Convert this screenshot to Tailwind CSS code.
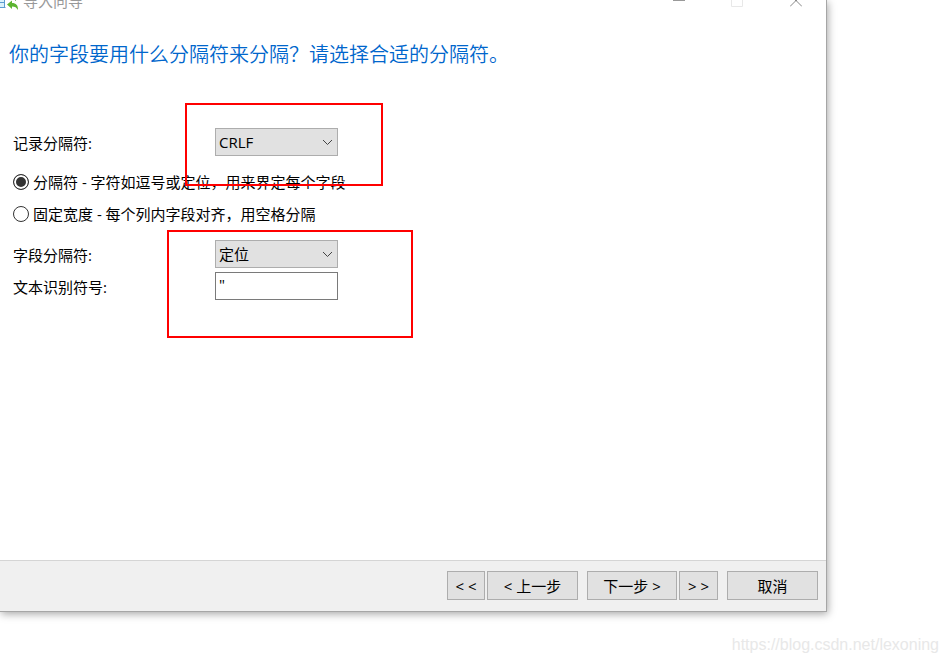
<!DOCTYPE html>
<html lang="zh-CN">
<head>
<meta charset="utf-8">
<title>导入向导</title>
<script src="https://cdn.jsdelivr.net/npm/@tailwindcss/browser@4"></script>
</head>
<body class="relative flex h-screen flex-col overflow-hidden bg-white pr-[120px] pb-[51px] font-['Open_Sans','Noto_Sans_CJK_SC',sans-serif] text-[15px] leading-5 font-[380] text-black">
<div class="flex flex-1 flex-col border-r border-b border-[#a6a6a6] bg-white shadow-[1px_2px_8px_rgba(0,0,0,0.35)]">
  <header class="flex h-[11px] items-end text-[#999999]">
    <svg class="mr-1 h-[11px] w-[19px] shrink-0" viewBox="0 0 19 11" aria-hidden="true">
      <path d="M0 0H5V7H0z" fill="#d9f1fb"/>
      <path d="M0 2.500H5M0 7.500H5.500M4.500 0V8" fill="none" stroke="#5b9bd0"/>
      <path d="M7 4.500L12 .5V3C16 3 18 5 18 10C16.500 7.500 15 6.500 12 6.500V9z" fill="#5cb531"/>
      <path d="M15.500 0V1" stroke="#87b87a"/>
    </svg>
    <h1 class="flex-1">导入向导</h1>
    <div class="flex self-start pr-6">
      <button aria-label="最小化" class="mr-[46px] block"><svg class="h-3 w-3" viewBox="0 0 12 12"><path d="M0 .5H12" stroke="#999999"/></svg></button>
      <button aria-label="最大化" disabled class="mr-[47px] block"><svg class="h-3 w-3" viewBox="0 0 12 12"><path d="M.5 0V6.500H11.500V0" fill="none" stroke="#e8e8e8"/></svg></button>
      <button aria-label="关闭" class="block"><svg class="h-3 w-3" viewBox="0 0 12 12"><path d="M0 6.500L6 .5L12 6.500M5 0L6 1L7 0" fill="none" stroke="#888888"/></svg></button>
    </div>
  </header>
  <main class="flex-1">
    <h2 class="px-[9px] pt-[30px] text-xl leading-7 font-[350] text-[#0066cc]">你的字段要用什么分隔符来分隔？请选择合适的分隔符。</h2>
    <form id="wizard" class="pt-[59px] pl-[13px]">
      <div class="flex h-7 items-center">
        <label for="record" class="w-[202px] pt-[2px]">记录分隔符:</label>
        <div class="relative w-[123px]">
          <select id="record" class="block h-7 w-full appearance-none rounded-none border border-[#adadad] bg-[#e1e1e1] px-[3px]"><option>CRLF</option></select>
          <svg class="pointer-events-none absolute top-[11px] right-[5px] h-[7px] w-[11px]" viewBox="0 0 11 7"><path d="M1 1L5.500 5.500L10 1" fill="none" stroke="#444444"/></svg>
          <div class="pointer-events-none absolute -top-[25px] -left-[30px] z-10 h-[83px] w-[198px] border-2 border-[#ff0000]"></div>
        </div>
      </div>
      <div class="flex flex-col pt-[10px]">
        <label class="flex h-8 items-center gap-1"><input type="radio" name="mode" checked class="h-4 w-4 appearance-none rounded-full border border-[#333333] bg-white checked:bg-[#333333] checked:shadow-[inset_0_0_0_2px_white]">分隔符 - 字符如逗号或定位，用来界定每个字段</label>
        <label class="flex h-8 items-center gap-1"><input type="radio" name="mode" class="h-4 w-4 appearance-none rounded-full border border-[#333333] bg-white checked:bg-[#333333] checked:shadow-[inset_0_0_0_2px_white]">固定宽度 - 每个列内字段对齐，用空格分隔</label>
      </div>
      <div class="flex flex-col gap-1 pt-[10px]">
        <div class="flex h-7 items-center">
          <label for="field" class="w-[202px] pt-[2px]">字段分隔符:</label>
          <div class="relative w-[123px]">
            <select id="field" class="block h-7 w-full appearance-none rounded-none border border-[#adadad] bg-[#e1e1e1] px-[3px]"><option>定位</option></select>
            <svg class="pointer-events-none absolute top-[11px] right-[5px] h-[7px] w-[11px]" viewBox="0 0 11 7"><path d="M1 1L5.500 5.500L10 1" fill="none" stroke="#444444"/></svg>
            <div class="pointer-events-none absolute -top-[10px] -left-12 z-10 h-[108px] w-[246px] border-2 border-[#ff0000]"></div>
          </div>
        </div>
        <div class="flex h-7 items-center">
          <label for="qualifier" class="w-[202px] pt-[2px]">文本识别符号:</label>
          <input id="qualifier" type="text" value="&quot;" class="h-7 w-[123px] border border-[#7a7a7a] bg-white px-[3px] pb-1">
        </div>
      </div>
    </form>
  </main>
  <footer class="flex justify-end border-t border-[#d5d5d5] bg-[#f0f0f0] pt-[10px] pr-2 pb-[11px]">
    <button class="mr-[2px] h-[29px] w-[38px] border border-[#adadad] bg-[#e1e1e1]">&lt; &lt;</button>
    <button class="mr-[9px] h-[29px] w-[91px] border border-[#adadad] bg-[#e1e1e1]">&lt; 上一步</button>
    <button class="mr-[2px] h-[29px] w-[90px] border border-[#adadad] bg-[#e1e1e1]">下一步 &gt;</button>
    <button class="mr-[9px] h-[29px] w-[39px] border border-[#adadad] bg-[#e1e1e1]">&gt; &gt;</button>
    <button class="h-[29px] w-[91px] border border-[#adadad] bg-[#e1e1e1]">取消</button>
  </footer>
</div>
<p class="absolute right-2 bottom-2 font-['Liberation_Sans',sans-serif] text-base leading-5 font-normal text-[#e8e8e8]">https://blog.csdn.net/lexoning</p>
</body>
</html>
